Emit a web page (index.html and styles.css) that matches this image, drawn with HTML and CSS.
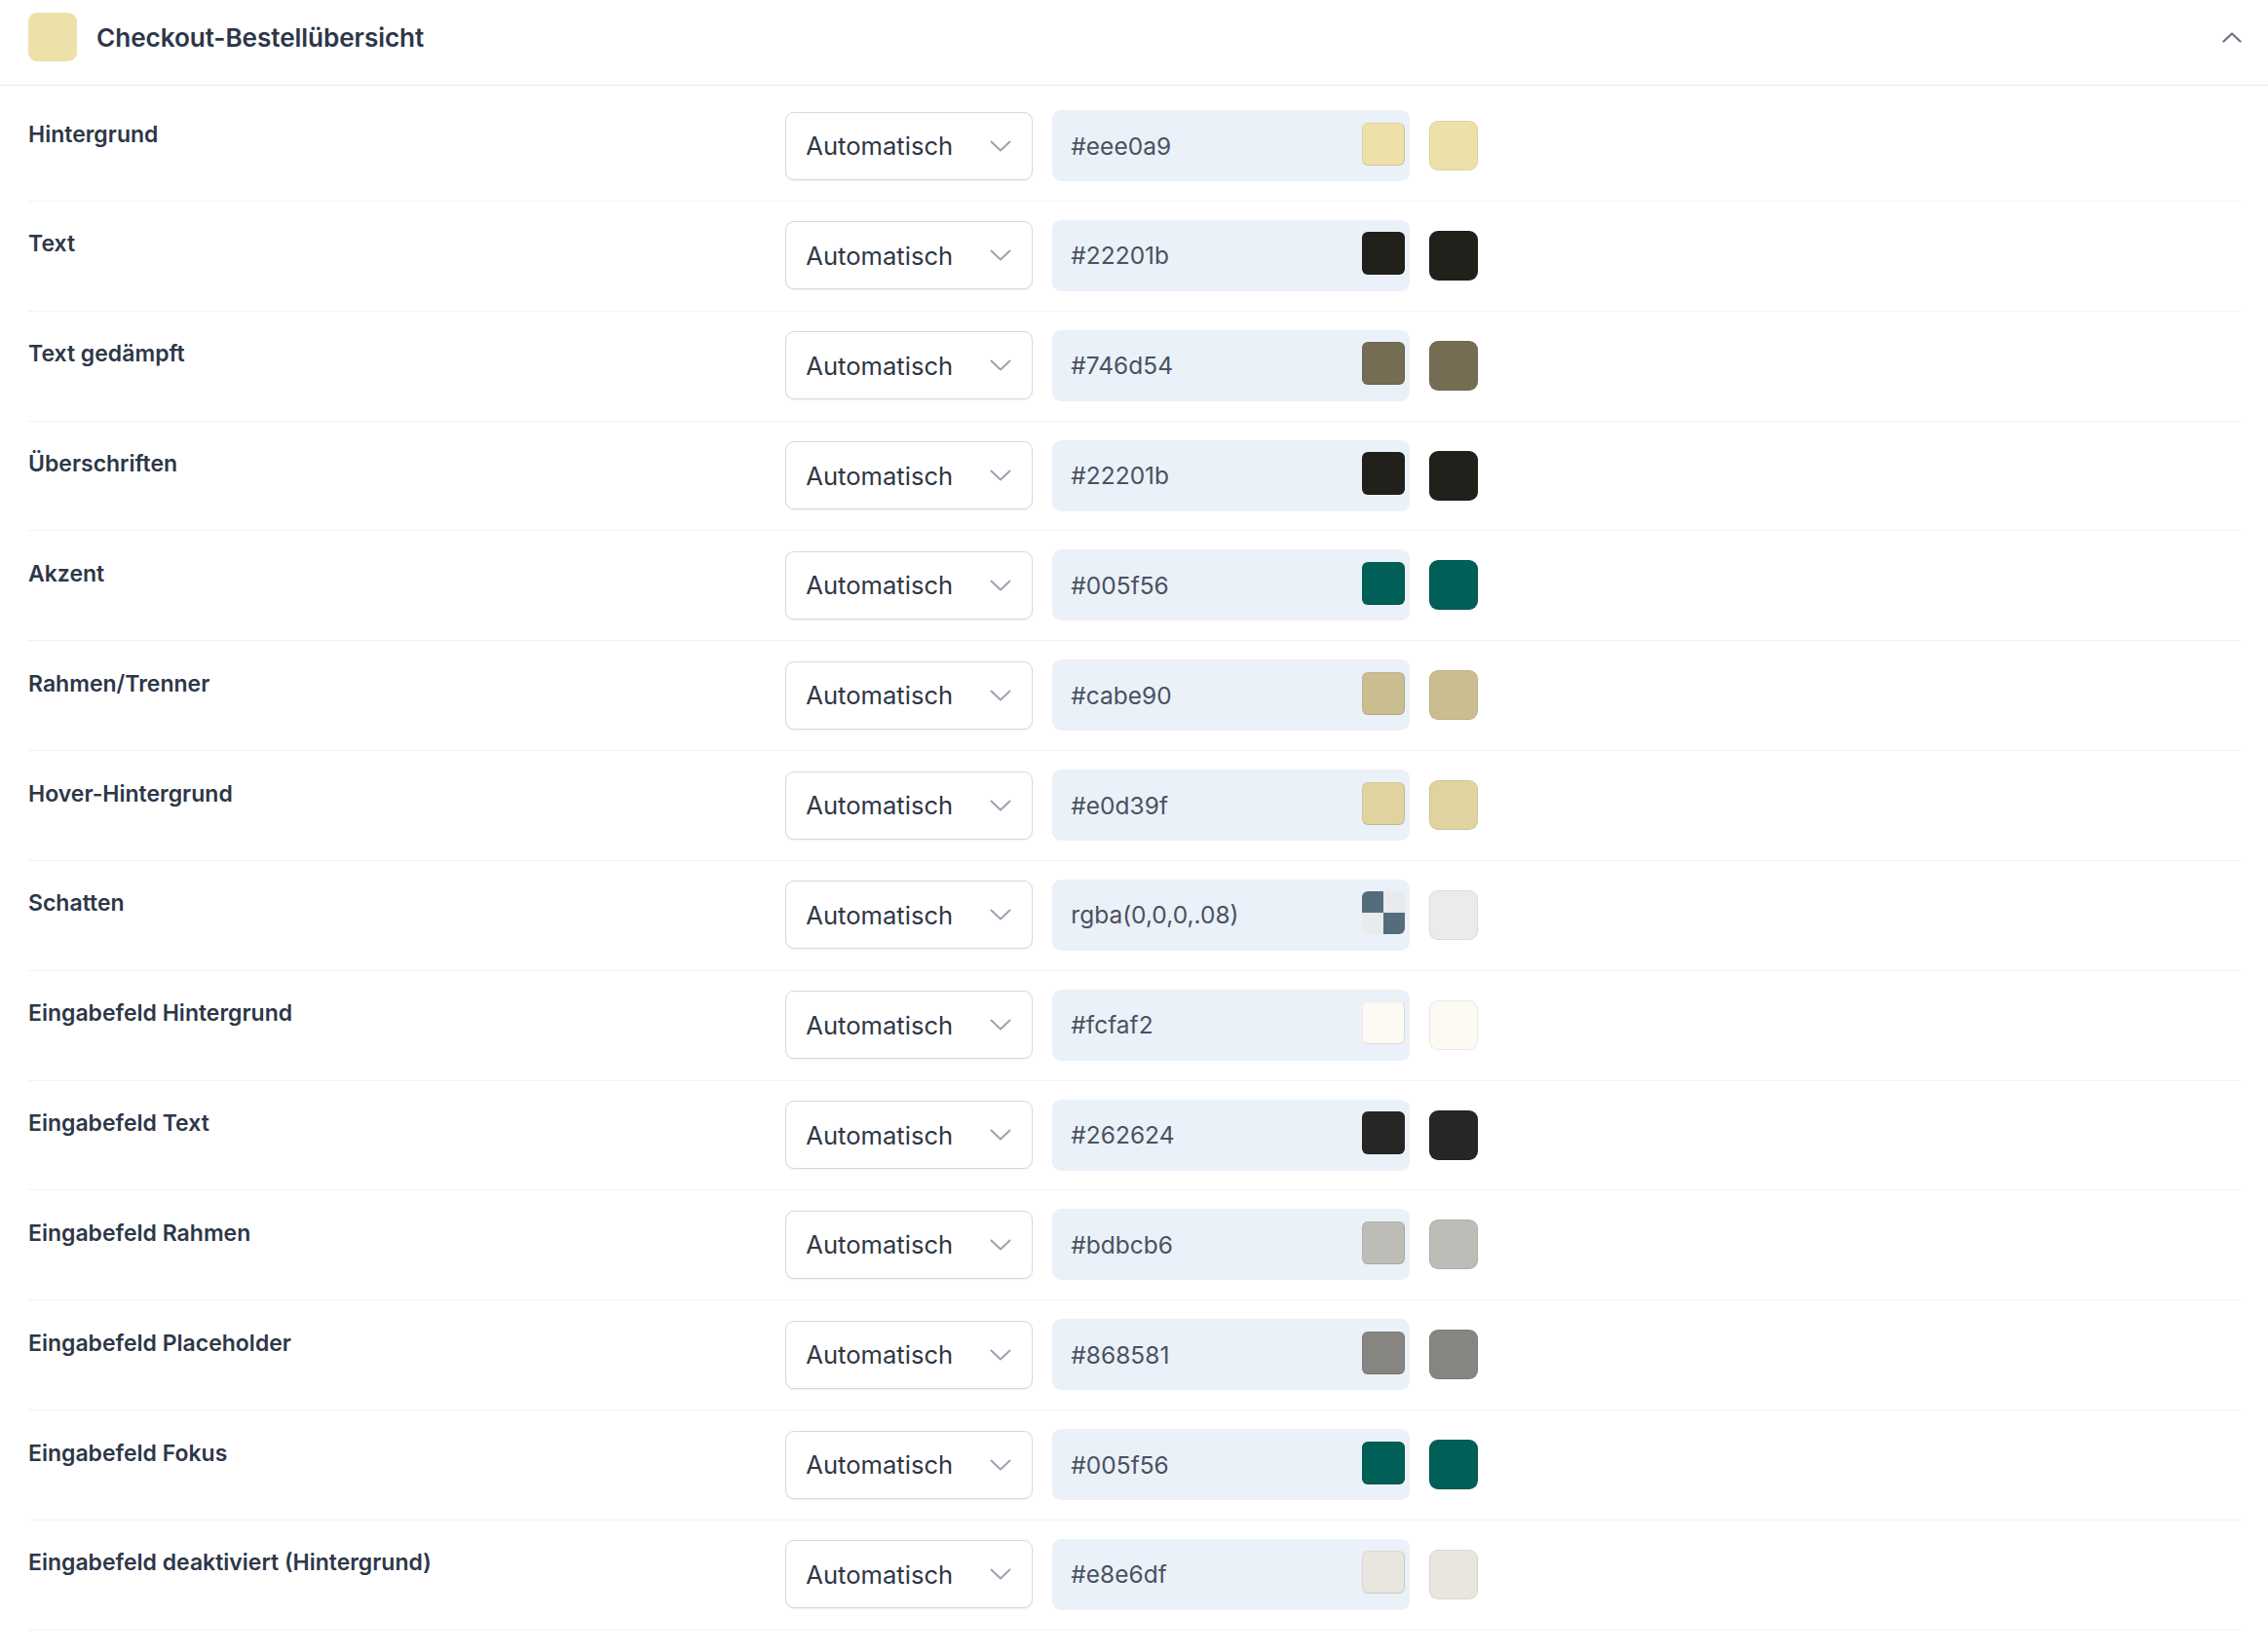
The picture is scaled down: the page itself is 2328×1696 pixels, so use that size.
FILE: index.html
```html
<!DOCTYPE html>
<html lang="de">
<head>
<meta charset="utf-8">
<title>Checkout-Bestellübersicht</title>
<link rel="stylesheet" href="styles.css">
</head>
<body>
<section class="panel">
  <header class="panel-head">
    <span class="head-swatch"></span>
    <h2 class="head-title">Checkout-Bestellübersicht</h2>
    <svg class="head-toggle" width="20" height="11" viewBox="0 0 20 11" fill="none" stroke="currentColor" stroke-width="2.2" stroke-linecap="round" stroke-linejoin="round"><path d="M1.5 9.5 10 1.5l8.5 8"/></svg>
  </header>

  <div class="rows">
    <div class="row">
      <div class="label">Hintergrund</div>
      <div class="controls">
        <div class="select"><span>Automatisch</span><svg class="caret" width="22" height="12" viewBox="0 0 22 12" fill="none" stroke="currentColor" stroke-width="2" stroke-linecap="round" stroke-linejoin="round"><path d="M1.5 1.5 11 10.5l9.5-9"/></svg></div>
        <div class="hex"><span>#eee0a9</span><span class="pick" style="background:#eee0a9"></span></div>
        <span class="preview" style="background:#eee0a9"></span>
      </div>
    </div>

    <div class="row">
      <div class="label">Text</div>
      <div class="controls">
        <div class="select"><span>Automatisch</span><svg class="caret" width="22" height="12" viewBox="0 0 22 12" fill="none" stroke="currentColor" stroke-width="2" stroke-linecap="round" stroke-linejoin="round"><path d="M1.5 1.5 11 10.5l9.5-9"/></svg></div>
        <div class="hex"><span>#22201b</span><span class="pick" style="background:#22201b"></span></div>
        <span class="preview" style="background:#22201b"></span>
      </div>
    </div>

    <div class="row">
      <div class="label">Text gedämpft</div>
      <div class="controls">
        <div class="select"><span>Automatisch</span><svg class="caret" width="22" height="12" viewBox="0 0 22 12" fill="none" stroke="currentColor" stroke-width="2" stroke-linecap="round" stroke-linejoin="round"><path d="M1.5 1.5 11 10.5l9.5-9"/></svg></div>
        <div class="hex"><span>#746d54</span><span class="pick" style="background:#746d54"></span></div>
        <span class="preview" style="background:#746d54"></span>
      </div>
    </div>

    <div class="row">
      <div class="label">Überschriften</div>
      <div class="controls">
        <div class="select"><span>Automatisch</span><svg class="caret" width="22" height="12" viewBox="0 0 22 12" fill="none" stroke="currentColor" stroke-width="2" stroke-linecap="round" stroke-linejoin="round"><path d="M1.5 1.5 11 10.5l9.5-9"/></svg></div>
        <div class="hex"><span>#22201b</span><span class="pick" style="background:#22201b"></span></div>
        <span class="preview" style="background:#22201b"></span>
      </div>
    </div>

    <div class="row">
      <div class="label">Akzent</div>
      <div class="controls">
        <div class="select"><span>Automatisch</span><svg class="caret" width="22" height="12" viewBox="0 0 22 12" fill="none" stroke="currentColor" stroke-width="2" stroke-linecap="round" stroke-linejoin="round"><path d="M1.5 1.5 11 10.5l9.5-9"/></svg></div>
        <div class="hex"><span>#005f56</span><span class="pick" style="background:#005f56"></span></div>
        <span class="preview" style="background:#005f56"></span>
      </div>
    </div>

    <div class="row">
      <div class="label">Rahmen/Trenner</div>
      <div class="controls">
        <div class="select"><span>Automatisch</span><svg class="caret" width="22" height="12" viewBox="0 0 22 12" fill="none" stroke="currentColor" stroke-width="2" stroke-linecap="round" stroke-linejoin="round"><path d="M1.5 1.5 11 10.5l9.5-9"/></svg></div>
        <div class="hex"><span>#cabe90</span><span class="pick" style="background:#cabe90"></span></div>
        <span class="preview" style="background:#cabe90"></span>
      </div>
    </div>

    <div class="row">
      <div class="label">Hover-Hintergrund</div>
      <div class="controls">
        <div class="select"><span>Automatisch</span><svg class="caret" width="22" height="12" viewBox="0 0 22 12" fill="none" stroke="currentColor" stroke-width="2" stroke-linecap="round" stroke-linejoin="round"><path d="M1.5 1.5 11 10.5l9.5-9"/></svg></div>
        <div class="hex"><span>#e0d39f</span><span class="pick" style="background:#e0d39f"></span></div>
        <span class="preview" style="background:#e0d39f"></span>
      </div>
    </div>

    <div class="row">
      <div class="label">Schatten</div>
      <div class="controls">
        <div class="select"><span>Automatisch</span><svg class="caret" width="22" height="12" viewBox="0 0 22 12" fill="none" stroke="currentColor" stroke-width="2" stroke-linecap="round" stroke-linejoin="round"><path d="M1.5 1.5 11 10.5l9.5-9"/></svg></div>
        <div class="hex"><span>rgba(0,0,0,.08)</span><span class="pick checker"></span></div>
        <span class="preview" style="background:#ebebeb"></span>
      </div>
    </div>

    <div class="row">
      <div class="label">Eingabefeld Hintergrund</div>
      <div class="controls">
        <div class="select"><span>Automatisch</span><svg class="caret" width="22" height="12" viewBox="0 0 22 12" fill="none" stroke="currentColor" stroke-width="2" stroke-linecap="round" stroke-linejoin="round"><path d="M1.5 1.5 11 10.5l9.5-9"/></svg></div>
        <div class="hex"><span>#fcfaf2</span><span class="pick" style="background:#fcfaf2"></span></div>
        <span class="preview" style="background:#fcfaf2"></span>
      </div>
    </div>

    <div class="row">
      <div class="label">Eingabefeld Text</div>
      <div class="controls">
        <div class="select"><span>Automatisch</span><svg class="caret" width="22" height="12" viewBox="0 0 22 12" fill="none" stroke="currentColor" stroke-width="2" stroke-linecap="round" stroke-linejoin="round"><path d="M1.5 1.5 11 10.5l9.5-9"/></svg></div>
        <div class="hex"><span>#262624</span><span class="pick" style="background:#262624"></span></div>
        <span class="preview" style="background:#262624"></span>
      </div>
    </div>

    <div class="row">
      <div class="label">Eingabefeld Rahmen</div>
      <div class="controls">
        <div class="select"><span>Automatisch</span><svg class="caret" width="22" height="12" viewBox="0 0 22 12" fill="none" stroke="currentColor" stroke-width="2" stroke-linecap="round" stroke-linejoin="round"><path d="M1.5 1.5 11 10.5l9.5-9"/></svg></div>
        <div class="hex"><span>#bdbcb6</span><span class="pick" style="background:#bdbcb6"></span></div>
        <span class="preview" style="background:#bdbcb6"></span>
      </div>
    </div>

    <div class="row">
      <div class="label">Eingabefeld Placeholder</div>
      <div class="controls">
        <div class="select"><span>Automatisch</span><svg class="caret" width="22" height="12" viewBox="0 0 22 12" fill="none" stroke="currentColor" stroke-width="2" stroke-linecap="round" stroke-linejoin="round"><path d="M1.5 1.5 11 10.5l9.5-9"/></svg></div>
        <div class="hex"><span>#868581</span><span class="pick" style="background:#868581"></span></div>
        <span class="preview" style="background:#868581"></span>
      </div>
    </div>

    <div class="row">
      <div class="label">Eingabefeld Fokus</div>
      <div class="controls">
        <div class="select"><span>Automatisch</span><svg class="caret" width="22" height="12" viewBox="0 0 22 12" fill="none" stroke="currentColor" stroke-width="2" stroke-linecap="round" stroke-linejoin="round"><path d="M1.5 1.5 11 10.5l9.5-9"/></svg></div>
        <div class="hex"><span>#005f56</span><span class="pick" style="background:#005f56"></span></div>
        <span class="preview" style="background:#005f56"></span>
      </div>
    </div>

    <div class="row">
      <div class="label">Eingabefeld deaktiviert (Hintergrund)</div>
      <div class="controls">
        <div class="select"><span>Automatisch</span><svg class="caret" width="22" height="12" viewBox="0 0 22 12" fill="none" stroke="currentColor" stroke-width="2" stroke-linecap="round" stroke-linejoin="round"><path d="M1.5 1.5 11 10.5l9.5-9"/></svg></div>
        <div class="hex"><span>#e8e6df</span><span class="pick" style="background:#e8e6df"></span></div>
        <span class="preview" style="background:#e8e6df"></span>
      </div>
    </div>
  </div>
</section>
</body>
</html>
```

FILE: styles.css
```css
* {
  box-sizing: border-box;
}

html, body {
  margin: 0;
  background: #ffffff;
}

body {
  font-family: Inter, "Liberation Sans", sans-serif;
  color: #2d3748;
}

/* Collapsible section header */
.panel-head {
  display: flex;
  align-items: center;
  gap: 20px;
  padding: 13px 27px 24px 29px;
  border-bottom: 1px solid #e6e8eb;
}

.head-swatch {
  width: 50px;
  height: 50px;
  border-radius: 9px;
  background: #eee0a9;
  flex: none;
}

.head-title {
  flex: 1;
  margin: 0;
  padding-top: 2px;
  font-size: 26.2px;
  font-weight: 600;
  line-height: 36px;
  color: #2d3748;
  letter-spacing: -0.1px;
}

.head-toggle {
  color: #6b7280;
  flex: none;
}

/* Colour rows */
.rows {
  padding: 6px 27px 0 29px;
}

.row {
  display: flex;
  align-items: flex-start;
  gap: 20px;
  padding: 19px 0 19.85px;
  border-bottom: 1px solid #f1f2f4;
}

.label {
  width: 33.333%;
  flex: none;
  padding-top: 6.5px;
  font-size: 23px;
  font-weight: 600;
  line-height: 36px;
  color: #2d3748;
}

.controls {
  display: flex;
  align-items: center;
  gap: 20px;
  height: 73px;
}

.select {
  width: 254px;
  height: 70px;
  display: flex;
  align-items: center;
  justify-content: space-between;
  padding: 0 21px 0 20px;
  background: #ffffff;
  border: 1px solid #d5d8dd;
  border-radius: 9px;
  box-shadow: 0 1px 2px rgba(16, 24, 40, 0.06);
  font-size: 25.6px;
  color: #2f3745;
}

.caret {
  color: #9aa3ae;
  flex: none;
}

.hex {
  width: 367px;
  height: 73px;
  display: flex;
  align-items: center;
  justify-content: space-between;
  padding: 0 5px 0 19px;
  background: #ebf1f9;
  border-radius: 9px;
  font-size: 24.5px;
  color: #4a5260;
}

.pick {
  width: 44px;
  height: 44px;
  margin-bottom: 4px;
  border-radius: 6px;
  border: 1px solid rgba(0, 0, 0, 0.12);
  border-top-color: rgba(0, 0, 0, 0.05);
  border-left-color: rgba(0, 0, 0, 0.05);
  flex: none;
}

.checker {
  border: none;
  background:
    linear-gradient(#536d7d, #536d7d) 0 0 / 50% 50% no-repeat,
    linear-gradient(#536d7d, #536d7d) 100% 100% / 50% 50% no-repeat,
    #e9eaec;
}

.preview {
  width: 50px;
  height: 51px;
  border-radius: 9px;
  border: 1px solid rgba(0, 0, 0, 0.07);
  flex: none;
}
```
